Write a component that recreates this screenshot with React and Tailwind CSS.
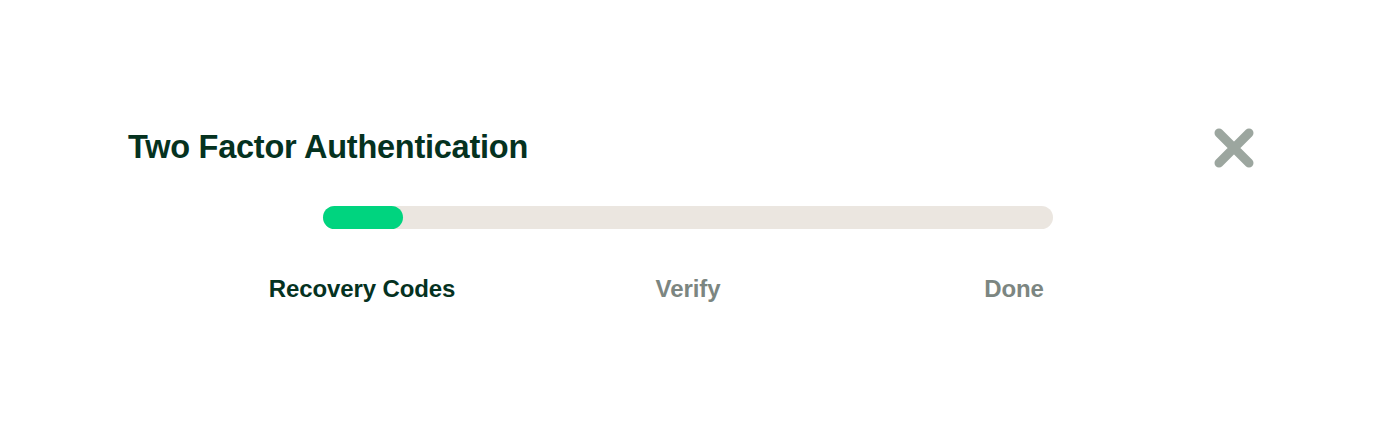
export default function App() {
  const steps = ['Recovery Codes', 'Verify', 'Done']
  const current = 0

  return (
    <div className="w-full h-[431px] bg-white" style={{ fontFamily: '"Liberation Sans", Arial, sans-serif' }}>
      <div className="pt-[124px] pl-[128px] pr-[127px]">
        <div className="flex items-start justify-between">
          <h1 className="text-[32.5px] leading-[46px] font-bold text-[#05321f] tracking-[-0.25px]">
            Two Factor Authentication
          </h1>
          <button className="mt-[4px] w-[40px] h-[40px] flex items-center justify-center">
            <svg width="40" height="40" viewBox="0 0 40 40" fill="none">
              <path d="M5 5 L35 35 M35 5 L5 35" stroke="#9ca69f" strokeWidth="9" strokeLinecap="round" />
            </svg>
          </button>
        </div>

        <div className="mt-[36px] pl-[195px]">
          <div className="w-[730px] h-[23px] rounded-full bg-[#ebe6e0]">
            <div className="w-[80px] h-full rounded-full bg-[#00d47f]" />
          </div>
        </div>

        <div className="mt-[45px] ml-[71px] w-[978px] grid grid-cols-3">
          {steps.map((s, i) => (
            <div
              key={s}
              className={`text-center text-[24px] leading-[30px] font-bold tracking-[-0.1px] ${i === current ? 'text-[#05321f]' : 'text-[#7c8681]'}`}
            >
              {s}
            </div>
          ))}
        </div>
      </div>
    </div>
  )
}
